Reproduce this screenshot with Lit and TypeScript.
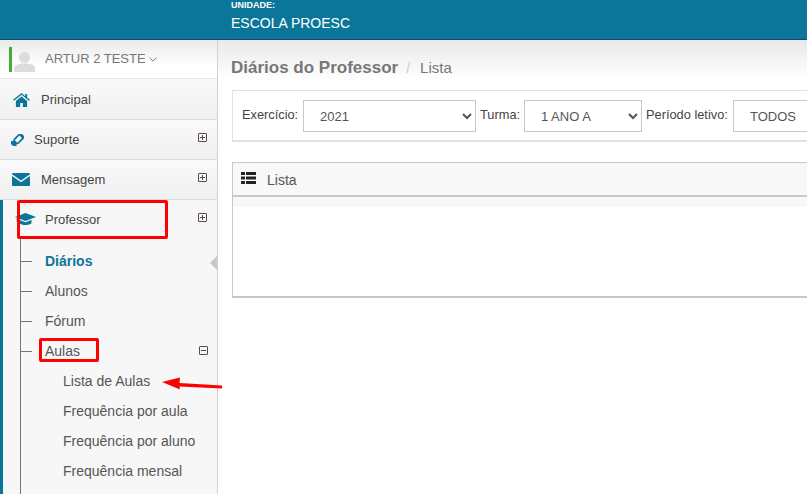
import { LitElement, html, css, svg } from "lit";
import { customElement } from "lit/decorators.js";

const home = svg`<path d="M9 0 0 7.200l1 1.200L9 2l8 6.400 1-1.200-3-2.400V1h-2v2.400z"/><path d="M3 8.700 9 3.700l6 5V15h-4.500v-4.200h-3V15H3z"/>`;
const ticket = svg`<g transform="rotate(-45 6.500 6)"><path fill-rule="evenodd" d="M-1 2.500H2a1 1 0 0 0 1 1 1 1 0 0 0 1-1h10v7H4a1 1 0 0 0-1-1 1 1 0 0 0-1 1H-1zM4.500 4.200v3.600h6.500V4.200z"/></g>`;
const mail = svg`<rect width="18" height="13" rx="1"/><path d="M0 2.200 9 8.400l9-6.200" fill="none" stroke="#f4f4f4" stroke-width="1.500"/>`;
const cap = svg`<path d="M10.500 0 21 4 10.500 8 0 4z"/><path d="M4.500 7v3.200c2 2.400 9.500 2.400 12 0V7l-6 2.300z"/><path d="M1.500 5v4h.8V5.300z" opacity=".6"/>`;

@customElement("app-root")
export class AppRoot extends LitElement {
  static styles = css`
    :host { display: block; width: 807px; height: 494px; overflow: hidden; position: relative;
      font-family: "Liberation Sans", Arial, sans-serif; font-size: 14px; color: #555; background: #fff; }
    * { box-sizing: border-box; }
    .top { height: 40px; background: #0b7699; border-bottom: 1px solid #0a4f66; padding-left: 231px; color: #fff; }
    .top small { display: block; font-size: 9px; font-weight: bold; line-height: 10px; height: 11px; }
    .top div { font-size: 14px; line-height: 16px; padding-top: 4px; }
    .body { display: flex; height: 454px; }
    .side { width: 218px; flex: none; background: #f6f6f6; border-right: 1px solid #d2d2d2; position: relative; }
    .user { height: 39px; display: flex; align-items: center; padding: 0 0 2px 9px; background: linear-gradient(#e9e9e9, #fff 65%); border-bottom: 1px solid #e4e4e4; color: #777; font-size: 13px; }
    .user i { width: 3px; height: 25px; background: #45ac2f; flex: none; margin: 2px 2px 0 0; }
    .user svg.p { width: 21px; height: 20px; margin-top: 7px; fill: #dcdcdc; flex: none; margin-right: 10px; }
    .user svg.c { width: 8px; height: 5px; margin-left: 3px; margin-top: 2px; fill: none; stroke: #888; stroke-width: 1; }
    .row { height: 40px; display: flex; align-items: center; color: #444; border-bottom: 1px solid #dcdcdc; background: linear-gradient(#fafafa, #f0f0f0); font-size: 13px; position: relative; }
    .row.first { height: 41px; padding-top: 1px; }
    .row .ico { fill: #0b7699; flex: none; }
    .plus { position: absolute; right: 10px; top: 13px; width: 9px; height: 9px; border: 1px solid #5a4a4a; border-radius: 1px; }
    .plus::before { content: ""; position: absolute; left: 1px; right: 1px; top: 3px; height: 1px; background: #5a4a4a; }
    .plus.open::after { display: none; }
    .plus::after { content: ""; position: absolute; top: 1px; bottom: 1px; left: 3px; width: 1px; background: #5a4a4a; }
    .prof { height: 294px; border-left: 3px solid #0b7699; position: relative; background: #f7f7f7; }
    .prof .head { height: 40px; display: flex; align-items: center; padding: 0 0 2px 42px; color: #444; font-size: 13px; position: relative; }
    .prof .head svg { position: absolute; left: 12px; top: 13px; width: 21px; height: 12px; fill: #0b7699; }
    .line { position: absolute; left: 17px; top: 39px; bottom: 0; width: 1px; background: #777; }
    .tree { list-style: none; margin: 0; padding: 6px 0 0; }
    .tree li { height: 30px; line-height: 30px; padding-left: 42px; position: relative; color: #555; font-size: 14px; }
    .tree li.t::before { content: ""; position: absolute; left: 18px; top: 15px; width: 11px; height: 1px; background: #777; }
    .tree li.sub { padding-left: 60px; }
    .tree li.on { color: #0b7699; font-weight: bold; }
    .tree .plus { top: 10px; right: 9px; }
    .notch { position: absolute; right: 0; top: 56px; width: 0; height: 0; border: 7px solid transparent; border-right-color: #c9c9c9; border-left-width: 0; }
    .main { flex: 1; min-width: 0; overflow: hidden; padding: 0 0 0 14px; background: linear-gradient(#e9e9e9, #fff 40px) no-repeat; background-size: 100% 40px; }
    .crumb { height: 50px; display: flex; align-items: center; padding-top: 5px; margin-left: -1px; }
    .crumb b { font-size: 17px; color: #777; }
    .crumb span { color: #ccc; margin: 0 10px 0 8px; }
    .crumb em { font-style: normal; color: #777; font-size: 15px; }
    .filter { width: 640px; height: 52px; background: #fff; border: 1px solid #e1e1e1; border-bottom-width: 2px; border-right: 0; display: flex; align-items: center; padding: 1px 0 0 9px; }
    .filter label { font-size: 12.8px; color: #444; padding-bottom: 3px; white-space: nowrap; flex: none; }
    .l1 { width: 57px; }
    .l2 { width: 40px; }
    .l3 { width: 81px; }
    select { height: 32px; border: 1px solid #c8c8c8; background: #fff; color: #555; font: 13px "Liberation Sans", Arial, sans-serif; padding: 0 12px; border-radius: 0; flex: none; }
    .s1 { width: 173px; margin: 0 4px; }
    .s2 { width: 118px; margin: 0 4px; }
    .s3 { width: 120px; margin-left: 6px; }
    .panel { margin-top: 20px; width: 640px; height: 136px; border: 1px solid #c8c8c8; border-width: 1px 0 2px 1px; background: #fff; }
    .phead { height: 34px; background: #f8f8f8; border-bottom: 2px solid #c8c8c8; display: flex; align-items: center; padding: 1px 0 0 8px; color: #555; font-size: 14px; }
    .phead svg { width: 15px; height: 12px; fill: #222; margin-right: 11px; margin-top: -3px; }
    .strip { height: 10px; background: #f8f8f8; }
    .red { position: absolute; border: 3px solid #f00; border-radius: 2px; }
    .r1 { left: 17px; top: 200px; width: 151px; height: 39px; }
    .r2 { left: 39px; top: 338px; width: 60px; height: 24px; }
    .arrow { position: absolute; left: 160px; top: 374px; width: 66px; height: 20px; }
  `;

  render() {
    return html`
      <div class="top"><small>UNIDADE:</small><div>ESCOLA PROESC</div></div>
      <div class="body">
        <nav class="side">
          <div class="user"><i></i>
            <svg class="p" viewBox="0 0 21 20"><circle cx="10.500" cy="5.500" r="5.500"/><path d="M0 20v-4c0-3 4.500-4.500 10.500-4.500S21 13 21 16v4z"/></svg>
            ARTUR 2 TESTE<svg class="c" viewBox="0 0 8 5"><path d="M.5.500l3.500 3.500L7.500.500"/></svg></div>
          <div class="row first" style="padding-left:13px"><svg class="ico" style="margin-right:11px" width="17" height="14" viewBox="0 0 18 15">${home}</svg>Principal</div>
          <div class="row" style="padding-left:11px"><svg class="ico" style="margin-right:10px" width="13" height="12" viewBox="0 0 13 12">${ticket}</svg>Suporte<span class="plus"></span></div>
          <div class="row" style="padding-left:12px"><svg class="ico" style="margin-right:11px" width="18" height="13" viewBox="0 0 18 13">${mail}</svg>Mensagem<span class="plus"></span></div>
          <div class="prof">
            <div class="head"><svg viewBox="0 0 21 12">${cap}</svg>Professor<span class="plus"></span></div>
            <div class="line"></div>
            <ul class="tree">
              <li class="t on">Diários</li>
              <li class="t">Alunos</li>
              <li class="t">Fórum</li>
              <li class="t">Aulas<span class="plus open"></span></li>
              <li class="sub">Lista de Aulas</li>
              <li class="sub">Frequência por aula</li>
              <li class="sub">Frequência por aluno</li>
              <li class="sub">Frequência mensal</li>
            </ul>
            <div class="notch"></div>
          </div>
        </nav>
        <main class="main">
          <div class="crumb"><b>Diários do Professor</b><span>/</span><em>Lista</em></div>
          <div class="filter">
            <label class="l1">Exercício:</label><select class="s1"><option>2021</option></select>
            <label class="l2">Turma:</label><select class="s2"><option>1 ANO A</option></select>
            <label class="l3">Período letivo:</label><select class="s3"><option>TODOS</option></select>
          </div>
          <section class="panel">
            <div class="phead"><svg viewBox="0 0 15 12"><path d="M0 0h4v3H0zM5 0h10v3H5zM0 4.500h4v3H0zM5 4.500h10v3H5zM0 9h4v3H0zM5 9h10v3H5z"/></svg>Lista</div>
            <div class="strip"></div>
          </section>
        </main>
      </div>
      <div class="red r1"></div>
      <div class="red r2"></div>
      <svg class="arrow" viewBox="0 0 66 20"><path d="M2 8 20 3.500 19.500 9 62 11.500v3L19.500 12.500 20 15.500z" fill="#f00"/></svg>
    `;
  }
}
